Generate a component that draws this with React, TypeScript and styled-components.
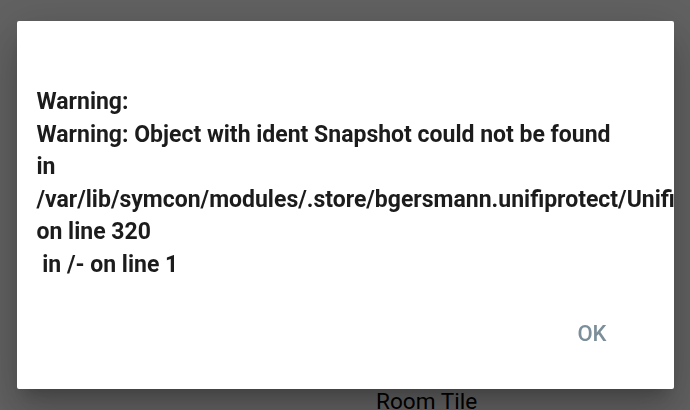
import * as React from "react";
import styled, { createGlobalStyle } from "styled-components";

const GlobalStyle = createGlobalStyle`
  html, body {
    margin: 0;
    padding: 0;
    background: #ffffff;
  }
  body {
    font-family: Roboto, "Liberation Sans", sans-serif;
    overflow: hidden;
  }
`;

const Page = styled.div`
  width: 690px;
  height: 410px;
  box-sizing: border-box;
  padding: 388px 0 0 376px;
  overflow: hidden;
`;

const TileLabel = styled.div`
  font-family: Roboto, "Liberation Sans", sans-serif;
  font-size: 22.6px;
  color: #000;
  line-height: 28px;
`;

const Backdrop = styled.div`
  position: fixed;
  inset: 0;
  background: rgba(0, 0, 0, 0.62);
  display: flex;
  align-items: center;
  justify-content: center;
`;

const Dialog = styled.div`
  width: 657px;
  background: #fff;
  border-radius: 2px;
  overflow: hidden;
  box-shadow: 0 11px 15px -7px rgba(0, 0, 0, 0.2),
    0 24px 38px 3px rgba(0, 0, 0, 0.14), 0 9px 46px 8px rgba(0, 0, 0, 0.12);
`;

const Content = styled.div`
  padding: 65px 0 0 20px;
  font-size: 23px;
  font-weight: 700;
  line-height: 32.5px;
  color: #1c1c1c;
  white-space: pre;
`;

const Actions = styled.div`
  display: flex;
  justify-content: flex-end;
  padding: 36px 57px 38px;
`;

const TextButton = styled.button`
  border: none;
  background: transparent;
  font-family: Roboto, "Liberation Sans", sans-serif;
  font-size: 22px;
  font-weight: 500;
  color: #7b8e99;
  padding: 6px 10px;
  line-height: 22px;
  cursor: pointer;
`;

const lines = [
  "Warning:",
  "Warning: Object with ident Snapshot could not be found",
  "in",
  "/var/lib/symcon/modules/.store/bgersmann.unifiprotect/UnifiProtect/module.php",
  "on line 320",
  " in /- on line 1",
];

export default function App() {
  return (
    <>
      <GlobalStyle />
      <Page>
        <TileLabel>Room Tile</TileLabel>
      </Page>
      <Backdrop>
        <Dialog>
          <Content>
            {lines.map((l, i) => (
              <div key={i}>{l}</div>
            ))}
          </Content>
          <Actions>
            <TextButton>OK</TextButton>
          </Actions>
        </Dialog>
      </Backdrop>
    </>
  );
}
